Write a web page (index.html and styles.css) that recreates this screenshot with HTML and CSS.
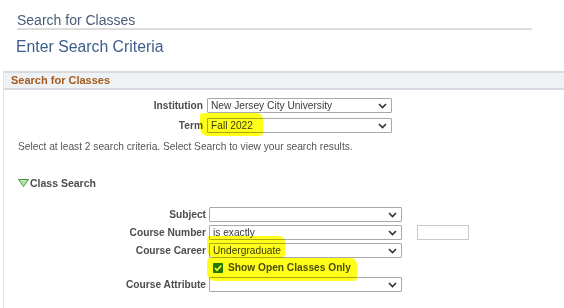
FILE: index.html
```html
<!DOCTYPE html>
<html lang="en">

<head>
    <meta charset="UTF-8">
    <meta name="viewport" content="width=device-width, initial-scale=1.0">
    <title>Search for Classes</title>
    <link rel="stylesheet" href="styles.css">
</head>

<body>
    <div class="page-title">Search for Classes</div>
    <div class="criteria-title">Enter Search Criteria</div>

    <div class="section">
        <div class="section-head">Search for Classes</div>

        <div class="section-body">
            <div class="form-grid top-grid">
                <span class="field-label">Institution</span>
                <div class="select-box">
                    <span>New Jersey City University</span>
                    <svg class="chevron" width="9" height="6" viewBox="0 0 9 6"><path d="M1 1l3.5 3.5L8 1" fill="none" stroke="#333" stroke-width="1.6"/></svg>
                </div>

                <span class="field-label">Term</span>
                <div class="select-box">
                    <span>Fall 2022</span>
                    <svg class="chevron" width="9" height="6" viewBox="0 0 9 6"><path d="M1 1l3.5 3.5L8 1" fill="none" stroke="#333" stroke-width="1.6"/></svg>
                </div>
            </div>

            <p class="hint">Select at least 2 search criteria. Select Search to view your search results.</p>

            <div class="group-title">
                <svg width="11" height="8" viewBox="0 0 11 8"><path d="M0.5 0.5h10L5.5 7.5z" fill="#b9e3b0" stroke="#3f9a3a" stroke-width="1"/></svg>
                <span>Class Search</span>
            </div>

            <div class="form-grid bottom-grid">
                <span class="field-label">Subject</span>
                <div class="select-box">
                    <span></span>
                    <svg class="chevron" width="9" height="6" viewBox="0 0 9 6"><path d="M1 1l3.5 3.5L8 1" fill="none" stroke="#333" stroke-width="1.6"/></svg>
                </div>
                <span></span>

                <span class="field-label">Course Number</span>
                <div class="select-box">
                    <span>is exactly</span>
                    <svg class="chevron" width="9" height="6" viewBox="0 0 9 6"><path d="M1 1l3.5 3.5L8 1" fill="none" stroke="#333" stroke-width="1.6"/></svg>
                </div>
                <div class="text-box"></div>

                <span class="field-label">Course Career</span>
                <div class="select-box">
                    <span>Undergraduate</span>
                    <svg class="chevron" width="9" height="6" viewBox="0 0 9 6"><path d="M1 1l3.5 3.5L8 1" fill="none" stroke="#333" stroke-width="1.6"/></svg>
                </div>
                <span></span>

                <span></span>
                <label class="check-row">
                    <svg class="check" width="10" height="10" viewBox="0 0 10 10"><rect x="0" y="0" width="10" height="10" rx="1" fill="#1d7a1d"/><path d="M2 5.2l2 2L8.2 2.6" fill="none" stroke="#fff" stroke-width="1.7"/></svg>
                    <span>Show Open Classes Only</span>
                </label>
                <span></span>

                <span class="field-label">Course Attribute</span>
                <div class="select-box">
                    <span></span>
                    <svg class="chevron" width="9" height="6" viewBox="0 0 9 6"><path d="M1 1l3.5 3.5L8 1" fill="none" stroke="#333" stroke-width="1.6"/></svg>
                </div>
                <span></span>
            </div>
        </div>

        <!-- marker highlights drawn over the screenshot -->
        <div class="marker marker-term"></div>
        <div class="marker marker-career"></div>
        <div class="marker marker-open"></div>
    </div>
</body>

</html>
```

FILE: styles.css
```css
body {
    margin: 0;
    font-family: "Liberation Sans", Arial, sans-serif;
    background: #fff;
    overflow: hidden;
}

.page-title {
    margin-left: 17px;
    width: 515px;
    padding-top: 12px;
    height: 16px;
    font-size: 14px;
    color: #4a5b78;
    border-bottom: 2px solid #dcdcdc;
}

.criteria-title {
    margin-left: 16px;
    margin-top: 8px;
    font-size: 15.8px;
    color: #3d5d8c;
}

.section {
    position: relative;
    margin-left: 3px;
    margin-top: 15px;
    border-left: 1px solid #e0e3e6;
    height: 240px;
}

.section-head {
    height: 15px;
    line-height: 15px;
    padding-left: 7px;
    font-size: 11px;
    font-weight: bold;
    color: #a35a1c;
    background: #eef2f4;
    border-top: 2px solid #d5dbe1;
    border-bottom: 2px solid #d5dbe1;
}

.section-body {
    padding-top: 8px;
}

.form-grid {
    display: grid;
    align-items: center;
    font-size: 10.2px;
}

.top-grid {
    grid-template-columns: 199px 185px;
    column-gap: 4px;
    row-gap: 5px;
}

.bottom-grid {
    grid-template-columns: 202px 193px 66px;
    column-gap: 3px;
    row-gap: 3px;
    margin-top: 18px;
}

.field-label {
    text-align: right;
    font-weight: bold;
    color: #4d4d4d;
}

.select-box {
    display: flex;
    align-items: center;
    justify-content: space-between;
    height: 13px;
    padding: 0 4px 0 3px;
    border: 1px solid #a9a9a9;
    border-radius: 1px;
    font-size: 10.2px;
    color: #3b3b3b;
    background: #fff;
}

.chevron {
    flex: none;
}

.text-box {
    margin-left: 12px;
    width: 50px;
    height: 13px;
    border: 1px solid #c9c9c9;
}

.hint {
    margin: 8px 0 0 14px;
    font-size: 10.2px;
    color: #555;
}

.group-title {
    display: flex;
    align-items: center;
    gap: 1px;
    margin: 25px 0 0 14px;
    font-size: 10.5px;
    font-weight: bold;
    color: #4d4d4d;
}

.check-row {
    display: flex;
    align-items: center;
    gap: 5px;
    padding-left: 4px;
    height: 13px;
    font-weight: bold;
    color: #4d4d4d;
}

.marker {
    position: absolute;
    background: #ffff1a;
    mix-blend-mode: multiply;
    border-radius: 3px 6px 4px 8px;
}

.marker-term {
    left: 196px;
    top: 42px;
    width: 63px;
    height: 23px;
}

.marker-career {
    left: 203px;
    top: 165px;
    width: 78px;
    height: 22px;
}

.marker-open {
    left: 203px;
    top: 187px;
    width: 150px;
    height: 23px;
}
```
